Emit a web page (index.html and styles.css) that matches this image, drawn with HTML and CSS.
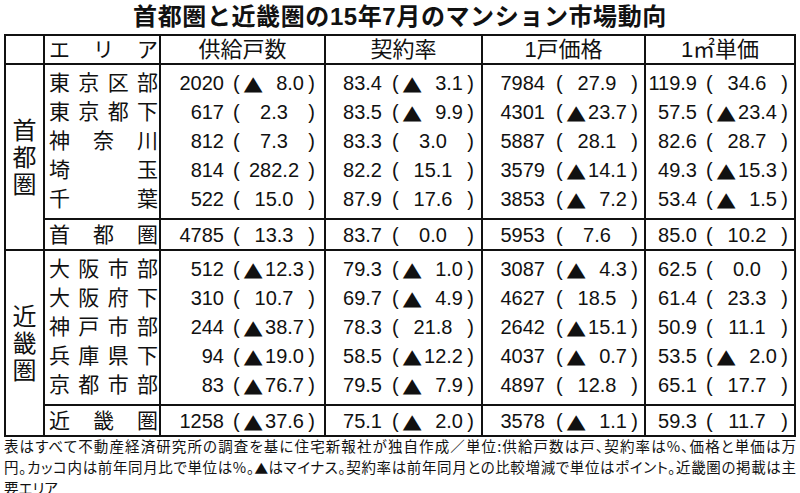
FILE: index.html
```html
<!DOCTYPE html>
<html lang="ja">
<head>
<meta charset="utf-8">
<title>首都圏と近畿圏の15年7月のマンション市場動向</title>
<link rel="stylesheet" href="styles.css">
</head>
<body>
<div class="page">
  <h1 class="title">首都圏と近畿圏の15年7月のマンション市場動向</h1>
  <table class="tbl">
    <colgroup>
      <col class="c-g"><col class="c-a"><col class="c-s"><col class="c-r"><col class="c-p"><col class="c-u">
    </colgroup>
    <thead>
      <tr class="hd">
        <th></th>
        <th><div class="area hname"><span>エ</span><span>リ</span><span>ア</span></div></th>
        <th><div class="hcell">供給戸数</div></th>
        <th><div class="hcell">契約率</div></th>
        <th><div class="hcell">1戸価格</div></th>
        <th><div class="hcell">1㎡単価</div></th>
      </tr>
    </thead>
    <tbody>
      <tr class="first">
        <td rowspan="6" class="gname"><div class="vt"><span>首</span><span>都</span><span>圏</span></div></td>
        <td><div class="area"><span>東</span><span>京</span><span>区</span><span>部</span></div></td>
        <td class="s"><div class="num"><span class="v">2020</span><span class="o">(</span><span class="d neg"><span class="tri">▲</span>8.0</span><span class="c">)</span></div></td>
        <td class="r"><div class="num"><span class="v">83.4</span><span class="o">(</span><span class="d neg"><span class="tri">▲</span>3.1</span><span class="c">)</span></div></td>
        <td class="p"><div class="num"><span class="v">7984</span><span class="o">(</span><span class="d">27.9</span><span class="c">)</span></div></td>
        <td class="u"><div class="num"><span class="v">119.9</span><span class="o">(</span><span class="d">34.6</span><span class="c">)</span></div></td>
      </tr>
      <tr>
        <td><div class="area"><span>東</span><span>京</span><span>都</span><span>下</span></div></td>
        <td class="s"><div class="num"><span class="v">617</span><span class="o">(</span><span class="d">2.3</span><span class="c">)</span></div></td>
        <td class="r"><div class="num"><span class="v">83.5</span><span class="o">(</span><span class="d neg"><span class="tri">▲</span>9.9</span><span class="c">)</span></div></td>
        <td class="p"><div class="num"><span class="v">4301</span><span class="o">(</span><span class="d neg"><span class="tri">▲</span>23.7</span><span class="c">)</span></div></td>
        <td class="u"><div class="num"><span class="v">57.5</span><span class="o">(</span><span class="d neg"><span class="tri">▲</span>23.4</span><span class="c">)</span></div></td>
      </tr>
      <tr>
        <td><div class="area"><span>神</span><span>奈</span><span>川</span></div></td>
        <td class="s"><div class="num"><span class="v">812</span><span class="o">(</span><span class="d">7.3</span><span class="c">)</span></div></td>
        <td class="r"><div class="num"><span class="v">83.3</span><span class="o">(</span><span class="d">3.0</span><span class="c">)</span></div></td>
        <td class="p"><div class="num"><span class="v">5887</span><span class="o">(</span><span class="d">28.1</span><span class="c">)</span></div></td>
        <td class="u"><div class="num"><span class="v">82.6</span><span class="o">(</span><span class="d">28.7</span><span class="c">)</span></div></td>
      </tr>
      <tr>
        <td><div class="area"><span>埼</span><span>玉</span></div></td>
        <td class="s"><div class="num"><span class="v">814</span><span class="o">(</span><span class="d">282.2</span><span class="c">)</span></div></td>
        <td class="r"><div class="num"><span class="v">82.2</span><span class="o">(</span><span class="d">15.1</span><span class="c">)</span></div></td>
        <td class="p"><div class="num"><span class="v">3579</span><span class="o">(</span><span class="d neg"><span class="tri">▲</span>14.1</span><span class="c">)</span></div></td>
        <td class="u"><div class="num"><span class="v">49.3</span><span class="o">(</span><span class="d neg"><span class="tri">▲</span>15.3</span><span class="c">)</span></div></td>
      </tr>
      <tr class="last">
        <td><div class="area"><span>千</span><span>葉</span></div></td>
        <td class="s"><div class="num"><span class="v">522</span><span class="o">(</span><span class="d">15.0</span><span class="c">)</span></div></td>
        <td class="r"><div class="num"><span class="v">87.9</span><span class="o">(</span><span class="d">17.6</span><span class="c">)</span></div></td>
        <td class="p"><div class="num"><span class="v">3853</span><span class="o">(</span><span class="d neg"><span class="tri">▲</span>7.2</span><span class="c">)</span></div></td>
        <td class="u"><div class="num"><span class="v">53.4</span><span class="o">(</span><span class="d neg"><span class="tri">▲</span>1.5</span><span class="c">)</span></div></td>
      </tr>
      <tr class="sub">
        <td><div class="area"><span>首</span><span>都</span><span>圏</span></div></td>
        <td class="s"><div class="num"><span class="v">4785</span><span class="o">(</span><span class="d">13.3</span><span class="c">)</span></div></td>
        <td class="r"><div class="num"><span class="v">83.7</span><span class="o">(</span><span class="d">0.0</span><span class="c">)</span></div></td>
        <td class="p"><div class="num"><span class="v">5953</span><span class="o">(</span><span class="d">7.6</span><span class="c">)</span></div></td>
        <td class="u"><div class="num"><span class="v">85.0</span><span class="o">(</span><span class="d">10.2</span><span class="c">)</span></div></td>
      </tr>
    </tbody>
    <tbody>
      <tr class="first">
        <td rowspan="6" class="gname"><div class="vt"><span>近</span><span>畿</span><span>圏</span></div></td>
        <td><div class="area"><span>大</span><span>阪</span><span>市</span><span>部</span></div></td>
        <td class="s"><div class="num"><span class="v">512</span><span class="o">(</span><span class="d neg"><span class="tri">▲</span>12.3</span><span class="c">)</span></div></td>
        <td class="r"><div class="num"><span class="v">79.3</span><span class="o">(</span><span class="d neg"><span class="tri">▲</span>1.0</span><span class="c">)</span></div></td>
        <td class="p"><div class="num"><span class="v">3087</span><span class="o">(</span><span class="d neg"><span class="tri">▲</span>4.3</span><span class="c">)</span></div></td>
        <td class="u"><div class="num"><span class="v">62.5</span><span class="o">(</span><span class="d">0.0</span><span class="c">)</span></div></td>
      </tr>
      <tr>
        <td><div class="area"><span>大</span><span>阪</span><span>府</span><span>下</span></div></td>
        <td class="s"><div class="num"><span class="v">310</span><span class="o">(</span><span class="d">10.7</span><span class="c">)</span></div></td>
        <td class="r"><div class="num"><span class="v">69.7</span><span class="o">(</span><span class="d neg"><span class="tri">▲</span>4.9</span><span class="c">)</span></div></td>
        <td class="p"><div class="num"><span class="v">4627</span><span class="o">(</span><span class="d">18.5</span><span class="c">)</span></div></td>
        <td class="u"><div class="num"><span class="v">61.4</span><span class="o">(</span><span class="d">23.3</span><span class="c">)</span></div></td>
      </tr>
      <tr>
        <td><div class="area"><span>神</span><span>戸</span><span>市</span><span>部</span></div></td>
        <td class="s"><div class="num"><span class="v">244</span><span class="o">(</span><span class="d neg"><span class="tri">▲</span>38.7</span><span class="c">)</span></div></td>
        <td class="r"><div class="num"><span class="v">78.3</span><span class="o">(</span><span class="d">21.8</span><span class="c">)</span></div></td>
        <td class="p"><div class="num"><span class="v">2642</span><span class="o">(</span><span class="d neg"><span class="tri">▲</span>15.1</span><span class="c">)</span></div></td>
        <td class="u"><div class="num"><span class="v">50.9</span><span class="o">(</span><span class="d">11.1</span><span class="c">)</span></div></td>
      </tr>
      <tr>
        <td><div class="area"><span>兵</span><span>庫</span><span>県</span><span>下</span></div></td>
        <td class="s"><div class="num"><span class="v">94</span><span class="o">(</span><span class="d neg"><span class="tri">▲</span>19.0</span><span class="c">)</span></div></td>
        <td class="r"><div class="num"><span class="v">58.5</span><span class="o">(</span><span class="d neg"><span class="tri">▲</span>12.2</span><span class="c">)</span></div></td>
        <td class="p"><div class="num"><span class="v">4037</span><span class="o">(</span><span class="d neg"><span class="tri">▲</span>0.7</span><span class="c">)</span></div></td>
        <td class="u"><div class="num"><span class="v">53.5</span><span class="o">(</span><span class="d neg"><span class="tri">▲</span>2.0</span><span class="c">)</span></div></td>
      </tr>
      <tr class="last">
        <td><div class="area"><span>京</span><span>都</span><span>市</span><span>部</span></div></td>
        <td class="s"><div class="num"><span class="v">83</span><span class="o">(</span><span class="d neg"><span class="tri">▲</span>76.7</span><span class="c">)</span></div></td>
        <td class="r"><div class="num"><span class="v">79.5</span><span class="o">(</span><span class="d neg"><span class="tri">▲</span>7.9</span><span class="c">)</span></div></td>
        <td class="p"><div class="num"><span class="v">4897</span><span class="o">(</span><span class="d">12.8</span><span class="c">)</span></div></td>
        <td class="u"><div class="num"><span class="v">65.1</span><span class="o">(</span><span class="d">17.7</span><span class="c">)</span></div></td>
      </tr>
      <tr class="sub">
        <td><div class="area"><span>近</span><span>畿</span><span>圏</span></div></td>
        <td class="s"><div class="num"><span class="v">1258</span><span class="o">(</span><span class="d neg"><span class="tri">▲</span>37.6</span><span class="c">)</span></div></td>
        <td class="r"><div class="num"><span class="v">75.1</span><span class="o">(</span><span class="d neg"><span class="tri">▲</span>2.0</span><span class="c">)</span></div></td>
        <td class="p"><div class="num"><span class="v">3578</span><span class="o">(</span><span class="d neg"><span class="tri">▲</span>1.1</span><span class="c">)</span></div></td>
        <td class="u"><div class="num"><span class="v">59.3</span><span class="o">(</span><span class="d">11.7</span><span class="c">)</span></div></td>
      </tr>
    </tbody>
  </table>
  <div class="note">
    <p class="ln j">表はすべて不動産経済研究所の調査を基に住宅新報社が独自作成／単位:供給戸数は戸、契約率は%、価格と単価は万</p>
    <p class="ln j">円。カッコ内は前年同月比で単位は%。<span class="tri2">▲</span>はマイナス。契約率は前年同月との比較増減で単位はポイント。近畿圏の掲載は主</p>
    <p class="ln">要エリア</p>
  </div>
</div>
</body>
</html>
```

FILE: styles.css
```css
* { box-sizing: border-box; }

body {
  margin: 0;
  background: #fff;
  color: #111;
  font-family: "Liberation Sans", "Noto Sans CJK JP", sans-serif;
}

.page {
  width: 800px;
  padding: 0 4px;
}

.title {
  margin: 0;
  height: 34px;
  font-size: 24px;
  line-height: 34px;
  font-weight: bold;
  letter-spacing: 0.6px;
  text-align: center;
  font-family: "Liberation Sans", "Noto Sans CJK JP", sans-serif;
}

.tbl {
  border-collapse: collapse;
  table-layout: fixed;
  width: 792px;
  border: 2px solid #111;
}

.c-g { width: 39px; }
.c-a { width: 116px; }
.c-s { width: 165px; }
.c-r { width: 157px; }
.c-p { width: 163px; }
.c-u { width: 150px; }

.tbl th,
.tbl td {
  padding: 0;
  border-left: 2px solid #111;
  border-right: 2px solid #111;
  border-top: none;
  border-bottom: none;
  vertical-align: top;
  font-weight: normal;
}

.tbl thead th { border-bottom: 2px solid #111; }
.tbl tr.sub td { border-top: 2px solid #111; border-bottom: 2px solid #111; }
.tbl td.gname { border-bottom: 2px solid #111; vertical-align: middle; }

.tbl tr.first td { padding-top: 3px; }
.tbl tr.last td { padding-bottom: 5px; }
.tbl tr.first td.gname { padding: 0; }

.hcell {
  height: 27px;
  display: flex;
  align-items: center;
  justify-content: center;
  font-size: 22px;
  line-height: 1;
}

.area {
  height: 29px;
  display: flex;
  align-items: center;
  justify-content: space-between;
  padding: 0 1px 0 4px;
  font-size: 21px;
  line-height: 1;
}

.hname { height: 27px; }

.vt {
  display: flex;
  flex-direction: column;
  align-items: center;
  font-size: 24px;
  line-height: 27px;
}

.num {
  height: 29px;
  display: flex;
  align-items: center;
  font-size: 20px;
  line-height: 1;
  white-space: nowrap;
}

.s { --vw: 63px; --gap: 9px; }
.r { --vw: 56px; --gap: 10px; }
.p { --vw: 62px; --gap: 11px; }
.u { --vw: 51px; --gap: 9px; }

.v { width: var(--vw); text-align: right; }
.o { width: 11px; margin-left: var(--gap); text-align: left; }
.c { width: 11px; text-align: right; }
.d {
  width: 60px;
  display: flex;
  align-items: center;
  justify-content: center;
}
.d.neg { justify-content: space-between; }

.tri {
  display: inline-block;
  font-family: "DejaVu Sans", sans-serif;
  font-size: 24px;
  line-height: 1;
  transform: scale(1.02, 0.82) translateY(1px);
}

.tri2 {
  display: inline-block;
  font-family: "DejaVu Sans", sans-serif;
  font-size: 17px;
  line-height: 1;
  transform: scaleY(0.85);
}

.note {
  margin-top: -2px;
  font-size: 14.5px;
  line-height: 21px;
  font-feature-settings: "palt";
  font-family: "Noto Sans CJK JP", sans-serif;
  width: 792px;
}

.ln { margin: 0; white-space: nowrap; height: 21px; }
.ln.j { text-align: justify; text-align-last: justify; }
```
